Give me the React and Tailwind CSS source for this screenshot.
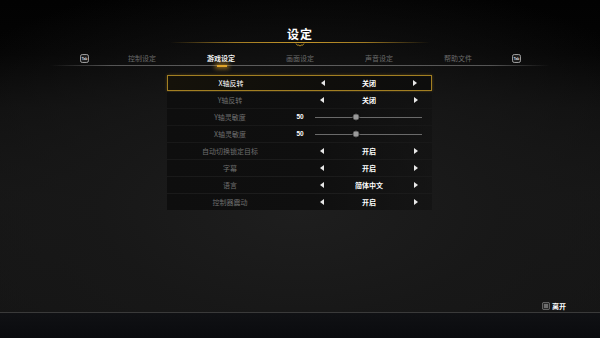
import React from "react";

const FONT = { fontFamily: '"Noto Sans CJK SC", "Noto Sans", sans-serif' };

const rows = [
  { label: "X轴反转", value: "关闭", active: true },
  { label: "Y轴反转", value: "关闭" },
  { label: "Y轴灵敏度", slider: true },
  { label: "X轴灵敏度", slider: true },
  { label: "自动切换锁定目标", value: "开启" },
  { label: "字幕", value: "开启" },
  { label: "语言", value: "简体中文" },
  { label: "控制器震动", value: "开启" },
];

const tabs = ["控制设定", "游戏设定", "画面设定", "声音设定", "帮助文件"];

function TabKey() {
  return (
    <svg width="9" height="9" viewBox="0 0 9 9" className="shrink-0">
      <rect x="0.5" y="0.5" width="8" height="8" rx="1.8" fill="#1e1e1e" stroke="#bdbdbd" strokeWidth="0.8" />
      <text x="4.5" y="5.6" fontSize="3.2" fill="#e0e0e0" textAnchor="middle" fontFamily="Liberation Sans, sans-serif" fontWeight="bold">
        Tab
      </text>
    </svg>
  );
}

function ArrowL() {
  return <div className="w-0 h-0 border-y-[3px] border-y-transparent border-r-[4px] border-r-[#e8e8e8]" />;
}
function ArrowR() {
  return <div className="w-0 h-0 border-y-[3px] border-y-transparent border-l-[4px] border-l-[#e8e8e8]" />;
}

function Row({ r }) {
  return (
    <div
      className={
        "h-[16px] flex items-stretch " +
        (r.active
          ? "border border-[#a27f22] bg-[linear-gradient(90deg,#15120a_0%,#0f0e0b_60%,#0d0d0d_100%)] shadow-[0_0_3px_rgba(200,150,30,0.35)]"
          : "bg-[linear-gradient(90deg,#0e0e0e_0%,#0f0f0f_55%,rgba(16,16,16,0.55)_100%)]")
      }
    >
      <div
        className={
          "w-[126px] shrink-0 flex items-center justify-center text-[7px] leading-none " +
          (r.active ? "text-white" : "text-[#6e6e6e]")
        }
      >
        {r.label}
      </div>
      {r.slider ? (
        <div className="flex-1 flex items-center pr-[10px]">
          <div
            className="w-[12px] ml-[1px] text-center text-[6.5px] leading-none text-white font-bold"
            style={{ fontFamily: '"Liberation Sans", Arial, sans-serif' }}
          >
            50
          </div>
          <div className="flex-1 ml-[9px] h-[1px] bg-[#6a6a6a] relative">
            <div className="absolute left-[38%] top-1/2 -translate-x-1/2 -translate-y-1/2 w-[7px] h-[7px] rounded-full bg-[#9a9a9a] border border-[#5a5a5a] shadow-[0_0_1px_#000]" />
          </div>
        </div>
      ) : (
        <div className="flex-1 flex items-center justify-between pl-[27px] pr-[14px]">
          <ArrowL />
          <div className="text-[7px] leading-none text-white font-bold">{r.value}</div>
          <ArrowR />
        </div>
      )}
    </div>
  );
}

export default function App() {
  return (
    <div
      style={FONT}
      className="w-[600px] h-[338px] overflow-hidden flex flex-col bg-[radial-gradient(ellipse_75%_70%_at_50%_62%,rgba(30,30,30,1)_0%,rgba(24,24,24,0.9)_45%,rgba(8,8,8,0)_100%),linear-gradient(180deg,#020202_0%,#040404_16%,#0f0f0f_32%,#161616_60%,#141414_92%)]"
    >
      {/* Title */}
      <div className="pt-[27px] h-[41px] flex justify-center">
        <div className="h-[14px] text-[12px] leading-[14px] text-white font-bold tracking-[1px]">设定</div>
      </div>
      <div className="mt-[1px] relative flex justify-center">
        <div className="w-[260px] h-[1px] bg-[linear-gradient(90deg,rgba(160,120,30,0)_0%,#a07a22_25%,#c4962a_50%,#a07a22_75%,rgba(160,120,30,0)_100%)]" />
        <svg width="10" height="4" viewBox="0 0 10 4" className="absolute top-[1px] left-1/2 -translate-x-1/2">
          <path d="M1 0.5 Q2 3.2 4 2 L5 3.2 L6 2 Q8 3.2 9 0.5" fill="none" stroke="#b88d28" strokeWidth="0.9" />
        </svg>
      </div>

      {/* Tabs */}
      <div className="mt-[10px] h-[10px] flex justify-center items-center">
        <TabKey />
        <div className="w-[14px]" />
        {tabs.map((t, i) => (
          <div
            key={t}
            className={
              "w-[79px] text-center text-[7px] leading-none " +
              (i === 1 ? "text-[#f2f2f2] font-bold" : "text-[#6a6a6a]")
            }
          >
            {t}
          </div>
        ))}
        <div className="w-[14px]" />
        <TabKey />
      </div>
      <div className="mt-[2px] relative flex justify-center">
        <div className="w-[500px] h-[1px] bg-[linear-gradient(90deg,rgba(90,90,90,0)_0%,#555_12%,#5e5e5e_50%,#555_88%,rgba(90,90,90,0)_100%)]" />
        <div className="absolute top-0 left-[217px] w-[10px] h-[2px] bg-[#e0a52a] shadow-[0_0_4px_2px_rgba(220,160,40,0.55)]" />
      </div>

      {/* Settings rows */}
      <div className="mt-[9px] ml-[167px] w-[265px] flex flex-col gap-[1px]">
        {rows.map((r) => (
          <Row key={r.label} r={r} />
        ))}
      </div>

      <div className="flex-1" />

      {/* Footer */}
      <div className="h-[10px] mb-[1px] flex justify-end items-center pr-[34px]">
        <svg width="8" height="8" viewBox="0 0 8 8" className="mr-[2px]">
          <rect x="0.4" y="0.4" width="7.2" height="7.2" rx="1.5" fill="#2a2a2a" stroke="#8a8a8a" strokeWidth="0.7" />
          <line x1="2" y1="3" x2="6" y2="3" stroke="#d0d0d0" strokeWidth="0.8" />
          <line x1="2" y1="5" x2="6" y2="5" stroke="#d0d0d0" strokeWidth="0.8" />
        </svg>
        <div className="text-[7px] leading-none text-white font-bold">离开</div>
      </div>
      <div className="h-[1px] bg-[#3a3a3a]" />
      <div className="h-[25px] bg-[linear-gradient(180deg,#101114_0%,#0a0b0e_100%)]" />
    </div>
  );
}
